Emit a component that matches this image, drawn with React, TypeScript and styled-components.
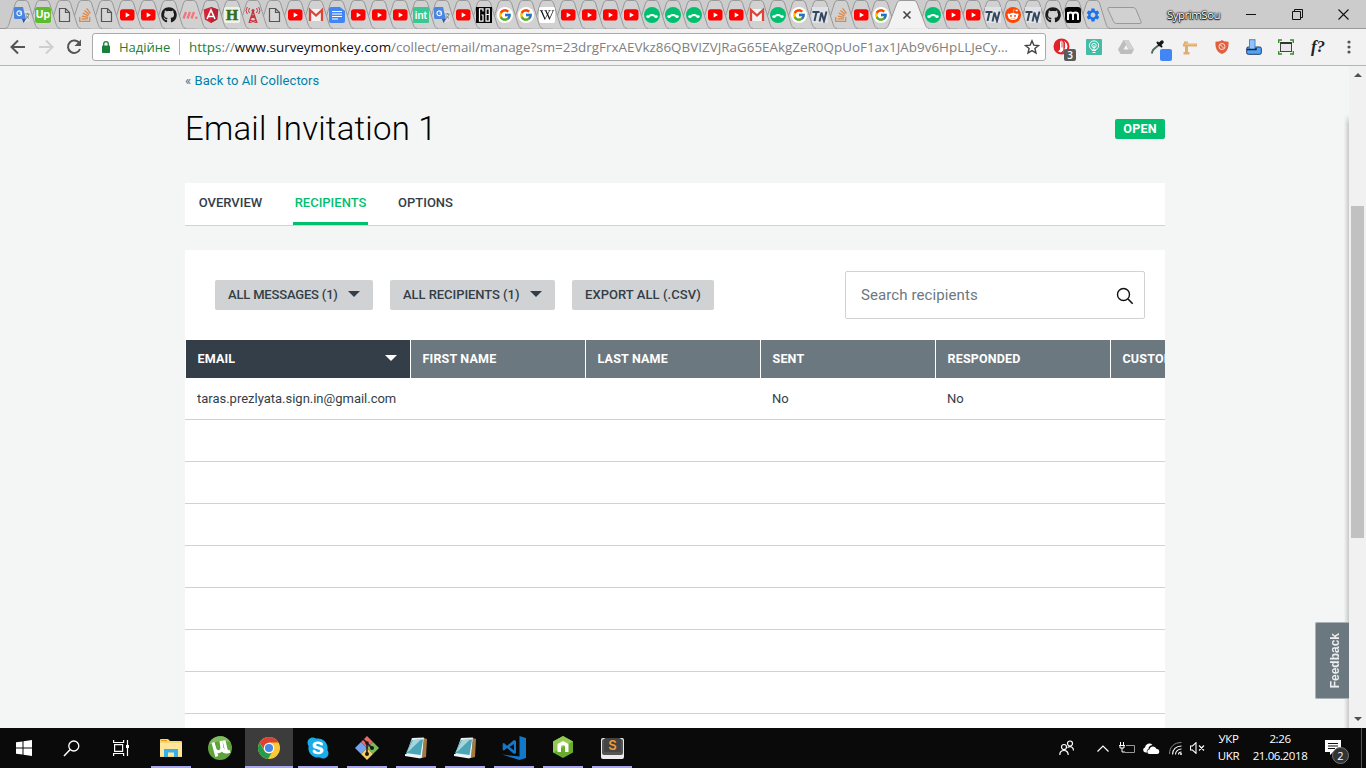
import React from "react";
import styled, { createGlobalStyle, css } from "styled-components";
import { FcGoogle } from "react-icons/fc";
import { FaGithub, FaStackOverflow, FaWikipediaW, FaRedditAlien, FaSkype } from "react-icons/fa";
import { MdSettings } from "react-icons/md";

const ui = '"Open Sans", "Noto Sans", sans-serif';
const brand = 'Roboto, "Liberation Sans", sans-serif';

const GlobalStyle = createGlobalStyle`
  * { box-sizing: border-box; }
  body { margin: 0; overflow: hidden; background: #f4f6f5; }
  svg { display: block; }
`;

const Screen = styled.div`
  width: 1366px;
  height: 768px;
  display: flex;
  flex-direction: column;
  overflow: hidden;
`;

/* ---------- tab strip ---------- */

const TabStrip = styled.div`
  height: 29px;
  flex: none;
  display: flex;
  background: #cccccc;
  border-bottom: 1px solid #999;
  padding-left: 11.5px;
`;

const TabItem = styled.div<{ $w: number; $z: number; $shift: number }>`
  position: relative;
  width: ${(p) => p.$w}px;
  height: 29px;
  margin-left: ${(p) => p.$shift}px;
  flex: none;
  z-index: ${(p) => p.$z};
  display: flex;
  justify-content: center;
  padding-top: 7px;
`;

const TabShape = styled.svg`
  position: absolute;
  top: 0;
  left: 50%;
  transform: translateX(-50%);
  overflow: visible;
`;

const Fav = styled.div`
  position: relative;
  width: 16px;
  height: 16px;
  flex: none;
  z-index: 1;
`;

const NewTab = styled.div`
  padding: 7px 0 0 4px;
`;

const WindowTools = styled.div`
  margin-left: auto;
  display: flex;
  align-items: center;
  height: 28px;
`;

const UserName = styled.div`
  width: 53px;
  margin-right: 8px;
  font: 11.5px ${ui};
  letter-spacing: -0.5px;
  color: #fff;
  text-shadow: 0 0 2px #000, 0 0 1px #000, 0 0 2px #222, 0 1px 1px #222;
`;

const WinButton = styled.div`
  width: 46px;
  height: 28px;
  display: flex;
  align-items: center;
  justify-content: center;
`;

type Kind =
  | "translate" | "up" | "file" | "so" | "yt" | "github" | "mm" | "angular" | "h" | "tower"
  | "gmail" | "docs" | "int" | "gb" | "google" | "wiki" | "sm" | "tn" | "reddit" | "m" | "gear" | "active";

const tabs: Kind[] = [
  "translate", "up", "file", "so", "file", "yt", "yt", "github", "mm", "angular", "h", "tower", "file", "yt",
  "gmail", "docs", "yt", "yt", "yt", "int", "translate", "yt", "gb", "google", "google", "wiki", "yt", "yt",
  "yt", "yt", "sm", "sm", "sm", "yt", "yt", "gmail", "sm", "google", "tn", "so", "yt", "google", "active",
  "sm", "yt", "yt", "tn", "reddit", "tn", "github", "m", "gear",
];

const S = ({ children }: { children: React.ReactNode }) => (
  <svg width="16" height="16" viewBox="0 0 16 16">{children}</svg>
);

const Favicon = ({ kind }: { kind: Kind }) => {
  switch (kind) {
    case "translate":
      return (
        <S>
          <path d="M6 4h9a1 1 0 0 1 1 1v9l-2 1H9z" fill="#dcdcdc" />
          <path d="M1 0h8l3 12H1.500A1.500 1.500 0 0 1 0 10.500V1.500A1.500 1.500 0 0 1 1 0z" fill="#4a85e0" />
          <path d="M8 12h4l-2.500 4z" fill="#2a56b8" />
          <path d="M7.500 5.300A2.400 2.400 0 1 0 7.500 7.200V6H5.400" fill="none" stroke="#fff" strokeWidth="1.100" />
          <path d="M11.500 7h4M13.500 6v1M15 7c-.4 2-1.600 3.500-3 4.500M12.300 8.500c.6 1.300 1.500 2.300 2.700 3" fill="none" stroke="#7c8288" strokeWidth="1" />
        </S>
      );
    case "up":
      return (
        <S>
          <rect width="16" height="16" rx="2.500" fill="#5bbc2e" />
          <text x="8" y="11" textAnchor="middle" fontFamily="Inter, sans-serif" fontWeight="700" fontSize="10.500" fill="#fff">Up</text>
        </S>
      );
    case "file":
      return <S><path d="M3.500 1.500h6l4 4v9h-10zM9.500 1.500v4h4" fill="#d6d6d6" stroke="#555" strokeWidth="1.200" /></S>;
    case "so":
      return <FaStackOverflow size={16} color="#e08743" />;
    case "yt":
      return (
        <S>
          <rect x="1" y="2.300" width="14.500" height="11.200" rx="2.800" fill="#f00" />
          <path d="M6.700 5.500v5L11 8z" fill="#fff" />
        </S>
      );
    case "github":
      return <FaGithub size={16} color="#1b1b1b" />;
    case "mm":
      return (
        <S>
          <path d="M1.500 11.500L4 5M5.500 11.500L8 5M9.500 11.500L12 5" stroke="#f2757d" strokeWidth="2.300" />
          <circle cx="14.300" cy="10.700" r="1.300" fill="#f2757d" />
        </S>
      );
    case "angular":
      return (
        <S>
          <path d="M8 0l7.300 2.600-1.100 10L8 16l-6.200-3.400-1.100-10z" fill="#d32438" />
          <path d="M8 0l7.300 2.600-1.100 10L8 16z" fill="#b52535" />
          <path d="M4 12L8 3l4 9M5.500 9.500h5" fill="none" stroke="#fff" strokeWidth="1.600" />
        </S>
      );
    case "h":
      return (
        <S>
          <rect width="16" height="16" rx="2" fill="#eef3e9" />
          <text x="8" y="13.200" textAnchor="middle" fontFamily='"Liberation Serif", serif' fontWeight="700" fontSize="15.500" stroke="#336c20" strokeWidth=".6" fill="#336c20">H</text>
        </S>
      );
    case "tower":
      return (
        <S>
          <path d="M8 4L4 16M8 4l4 12M6.500 8l4 3.500M9.500 8l-4 3.500M5 13l6 2.500M11 13l-6 2.500" fill="none" stroke="#c8343c" strokeWidth="1.300" />
          <circle cx="8" cy="3.500" r="1.500" fill="#c8343c" />
          <path d="M4.500 1a4 4 0 0 0 0 5M11.500 1a4 4 0 0 1 0 5M2.300 0a6 6 0 0 0 0 7M13.700 0a6 6 0 0 1 0 7" fill="none" stroke="#c8343c" />
        </S>
      );
    case "gmail":
      return (
        <S>
          <rect x="1" y="2" width="14" height="12" rx="1" fill="#f3f3f3" />
          <path d="M2 14V3l6 5.500L14 3v11" fill="none" stroke="#dc4437" strokeWidth="2.300" />
        </S>
      );
    case "docs":
      return (
        <S>
          <path d="M2 0h9l5 4v10a2 2 0 0 1-2 2H2a2 2 0 0 1-2-2V2a2 2 0 0 1 2-2z" fill="#4285f4" />
          <path d="M3 4.500h10M3 7h10M3 9.500h10M3 12h6" stroke="#fff" strokeWidth="1.200" />
        </S>
      );
    case "int":
      return (
        <S>
          <rect width="16" height="16" rx="1" fill="#3bc792" />
          <text x="8" y="12" textAnchor="middle" fontFamily="Inter, sans-serif" fontWeight="600" fontSize="10" fill="#fff">int</text>
        </S>
      );
    case "gb":
      return (
        <S>
          <rect width="16" height="16" fill="#050505" />
          <path d="M7 4.500V1.800H3.500v12.400H7V8H5.500M10 1.800h3.300v12.400H10zM10 7.500h3" fill="none" stroke="#fff" strokeWidth="1.200" />
        </S>
      );
    case "google":
      return (
        <S>
          <circle cx="8" cy="8" r="8" fill="#fff" />
          <g transform="translate(1 1)"><FcGoogle size={14} /></g>
        </S>
      );
    case "wiki":
      return (
        <S>
          <rect width="16" height="16" rx="2" fill="#fff" />
          <g transform="translate(.5 .5)"><FaWikipediaW size={15} color="#111" /></g>
        </S>
      );
    case "sm":
      return (
        <S>
          <circle cx="8" cy="8" r="8" fill="#00bf6f" />
          <path d="M4 10.800a4.200 4.200 0 0 1 8 0" fill="none" stroke="#fff" strokeWidth="2" />
          <circle cx="3.500" cy="9.500" r="1.200" fill="#fff" />
          <circle cx="12.500" cy="9.500" r="1.200" fill="#fff" />
        </S>
      );
    case "tn":
      return (
        <S>
          <rect width="16" height="16" fill="#dfe2e6" />
          <path d="M.500 5h7M4.500 5L2.500 14M7.500 14.500L9.500 5.500l2.500 8.500L14.500 4.500" fill="none" stroke="#32465e" strokeWidth="1.900" />
        </S>
      );
    case "reddit":
      return (
        <S>
          <circle cx="8" cy="8" r="8" fill="#ff4500" />
          <g transform="translate(2 1.800)"><FaRedditAlien size={12} color="#fff" /></g>
        </S>
      );
    case "m":
      return (
        <S>
          <rect width="16" height="16" rx="3" fill="#050505" />
          <path d="M3 13V5M3 8c0-3.200 5-3.200 5 0v5M8 8c0-3.200 5-3.200 5 0v5" fill="none" stroke="#fff" strokeWidth="2" />
        </S>
      );
    case "gear":
      return <MdSettings size={16} color="#1a73e8" />;
    case "active":
      return <S><path d="M4.500 4.500l7 7M11.500 4.500l-7 7" stroke="#444" strokeWidth="1.600" /></S>;
  }
};

/* ---------- address bar ---------- */

const Toolbar = styled.div`
  height: 37px;
  flex: none;
  display: flex;
  align-items: center;
  background: #f2f2f2;
  border-bottom: 1px solid #b6b6b6;
`;

const NavButtons = styled.div`
  width: 92px;
  padding-left: 9px;
  display: flex;
  gap: 10px;
`;

const Omnibox = styled.div`
  width: 954px;
  height: 28px;
  background: #fff;
  border: 1px solid #aaa;
  border-radius: 3px;
  display: flex;
  align-items: center;
  padding: 0 5px 0 8px;
  font: 13.6px ${ui};
`;

const Secure = styled.span`
  width: 60px;
  margin-left: 8px;
  color: #188038;
  white-space: nowrap;
  font-size: 13px;
`;

const Separator = styled.i`
  width: 1px;
  height: 16px;
  margin-right: 9px;
  background: #aaa;
`;

const Url = styled.span`
  flex: 1;
  white-space: nowrap;
  color: #808080;
  font-size: 13.4px;
  letter-spacing: 0.015px;
  b { font-weight: 400; color: #111; }
  em { font-style: normal; color: #188038; }
`;

const Extensions = styled.div`
  display: flex;
  flex: 1;
`;

const Extension = styled.div`
  position: relative;
  width: 32px;
  height: 24px;
  flex: none;
  display: flex;
  align-items: center;
  justify-content: center;
  &:last-child { width: 29px; }
`;

const Count = styled.span`
  position: absolute;
  left: 18px;
  top: 14px;
  width: 12px;
  height: 12px;
  border-radius: 2px;
  background: #5a5a5a;
  color: #fff;
  font: 600 10px/12px ${ui};
  text-align: center;
`;

const Swatch = styled(Count)`
  background: #4285f4;
`;

const FnLabel = styled.span`
  font: italic 700 17px/20px "Liberation Serif", serif;
  color: #222;
`;

/* ---------- page ---------- */

const Viewport = styled.div`
  height: 662px;
  flex: none;
  display: flex;
  position: relative;
`;

const Page = styled.main`
  width: 1349px;
  overflow: hidden;
  position: relative;
  background: #f4f6f5;
  padding-left: 185px;
  font-family: ${brand};
  color: #333e48;
`;

const Content = styled.div`
  width: 980px;
`;

const BackLink = styled.a`
  display: block;
  height: 30px;
  line-height: 29px;
  font-size: 13px;
  letter-spacing: 0.08px;
  color: #007faa;
`;

const TitleRow = styled.header`
  height: 87px;
  display: flex;
  justify-content: space-between;
  align-items: flex-start;
`;

const Title = styled.h1`
  margin: 13px 0 0;
  font-weight: 300;
  font-size: 33px;
  line-height: 40px;
  letter-spacing: 0.2px;
  color: #000;
`;

const Status = styled.span`
  width: 50px;
  height: 20px;
  margin-top: 23px;
  border-radius: 2px;
  background: #00bf6f;
  color: #fff;
  font-weight: 700;
  font-size: 12.5px;
  letter-spacing: 0.2px;
  line-height: 20px;
  text-align: center;
`;

const Nav = styled.nav`
  height: 43px;
  background: #fff;
  border-bottom: 1px solid #d0d2d3;
  display: flex;
  padding-left: 11px;
  gap: 28px;
`;

const NavItem = styled.a<{ $active?: boolean; $w: number }>`
  width: ${(p) => p.$w}px;
  height: 42px;
  text-align: center;
  font-weight: 500;
  font-size: 13px;
  line-height: 40px;
  color: ${(p) => (p.$active ? "#00bf6f" : "#333e48")};
  border-bottom: 3px solid ${(p) => (p.$active ? "#00bf6f" : "transparent")};
`;

const Panel = styled.section`
  margin-top: 24px;
  height: 478px;
  background: #fff;
  overflow: hidden;
`;

const Filters = styled.div`
  height: 90px;
  display: flex;
  align-items: center;
  padding: 0 20px 0 30px;
  gap: 17px;
`;

const Button = styled.button<{ $w: number; $ls?: number }>`
  width: ${(p) => p.$w}px;
  height: 30px;
  border: 0;
  border-radius: 2px;
  background: #d0d2d3;
  color: #333e48;
  font: 500 13px ${brand};
  letter-spacing: ${(p) => p.$ls ?? 0}px;
  display: flex;
  align-items: center;
  justify-content: space-between;
  padding: 0 13px 2px;
  white-space: nowrap;
`;

const Caret = styled.i`
  border: 6px solid transparent;
  border-top-color: currentColor;
  border-bottom: 0;
`;

const Search = styled.div`
  width: 300px;
  height: 48px;
  margin-left: auto;
  border: 1px solid #d0d2d3;
  border-radius: 2px;
  display: flex;
  align-items: center;
  justify-content: space-between;
  padding: 0 10px 0 15px;
  font-size: 15px;
  letter-spacing: 0.1px;
  color: #6b787f;
  svg { margin-top: 2px; }
`;

const rowGrid = css`
  display: grid;
  grid-template-columns: 225px repeat(4, 175px) 175px;
`;

const HeadRow = styled.div`
  ${rowGrid}
  height: 38px;
  padding-left: 1px;
`;

const HeadCell = styled.div<{ $sorted?: boolean }>`
  display: flex;
  align-items: center;
  justify-content: space-between;
  padding: 0 13px 2px 11.500px;
  border-right: 1px solid #fff;
  background: ${(p) => (p.$sorted ? "#333e48" : "#6b787f")};
  color: #fff;
  font-weight: 700;
  font-size: 12.5px;
  letter-spacing: 0.18px;
  white-space: nowrap;
`;

const Row = styled.div`
  ${rowGrid}
  height: 42px;
  border-bottom: 1px solid #d0d2d3;
  font-size: 13px;
  line-height: 41px;
  span { padding-left: 12px; letter-spacing: -0.01px; white-space: nowrap; }
`;

const EdgeShadow = styled.div`
  position: absolute;
  right: 0;
  top: 48px;
  bottom: 0;
  width: 5px;
  background: linear-gradient(to right, rgba(0, 0, 0, 0), rgba(0, 0, 0, 0.18));
  mask-image: linear-gradient(to bottom, transparent, #000 10px);
`;

const Feedback = styled.div`
  position: absolute;
  right: 0;
  top: 556px;
  width: 34px;
  height: 77px;
  border: 1px solid #a9b2b6;
  border-right: 0;
  border-radius: 2px 0 0 2px;
  background: #6b787f;
  color: #eceeef;
  display: flex;
  align-items: center;
  justify-content: center;
  padding-left: 5px;
  font: 700 12px "Liberation Sans", sans-serif;
  span { writing-mode: vertical-rl; transform: rotate(180deg); }
`;

const Scrollbar = styled.div`
  width: 17px;
  background: #f1f1f1;
  display: flex;
  flex-direction: column;
  align-items: center;
`;

const Arrow = styled.div<{ $down?: boolean }>`
  height: 17px;
  padding-top: 7px;
  transform: ${(p) => (p.$down ? "rotate(180deg)" : "none")};
`;

const Track = styled.div`
  flex: 1;
  padding-top: 123px;
`;

const Thumb = styled.div`
  width: 13px;
  height: 332px;
  background: #c1c1c1;
`;

/* ---------- taskbar ---------- */

const Taskbar = styled.footer`
  height: 40px;
  flex: none;
  display: flex;
  background: #0a0a0a;
  color: #fff;
  font-family: ${ui};
`;

const Task = styled.div<{ $open?: boolean; $focus?: boolean; $w?: number }>`
  width: ${(p) => p.$w ?? 49}px;
  height: 40px;
  margin-right: ${(p) => (p.$focus ? 1 : 0)}px;
  padding-right: ${(p) => (p.$focus ? 0 : 1)}px;
  display: flex;
  align-items: center;
  justify-content: center;
  flex-direction: column;
  position: relative;
  background: ${(p) => (p.$focus ? "#3c3c3c" : "transparent")};
  &::after {
    content: "";
    position: absolute;
    bottom: 0;
    left: ${(p) => (p.$focus ? 0 : 4)}px;
    right: ${(p) => (p.$focus ? 0 : 5)}px;
    height: 2px;
    background: ${(p) => (p.$open ? "#a9a8ea" : "transparent")};
  }
`;

const Tray = styled.div`
  margin-left: auto;
  display: flex;
  align-items: center;
`;

const TrayIcon = styled.div<{ $w: number }>`
  width: ${(p) => p.$w}px;
  display: flex;
  justify-content: center;
`;

const TwoLines = styled.div<{ $w: number }>`
  width: ${(p) => p.$w}px;
  font-size: 11.5px;
  line-height: 17px;
  letter-spacing: -0.4px;
  text-align: center;
  padding-bottom: 2px;
`;

const Notice = styled.div`
  position: relative;
  width: 45px;
  height: 40px;
  padding: 12px 0 0 9px;
`;

const NoticeCount = styled.span`
  position: absolute;
  left: 16px;
  top: 19px;
  width: 17px;
  height: 17px;
  border-radius: 50%;
  border: 1px solid #777;
  background: #333;
  font-size: 11px;
  line-height: 15px;
  text-align: center;
`;

const Peek = styled.div`
  width: 5px;
  height: 40px;
  border-left: 1px solid #555;
`;

const NotepadIcon = () => (
  <svg width="24" height="24" viewBox="0 0 24 24">
    <path d="M20 2l3 1-1 18-4 1z" fill="#a4783e" />
    <path d="M8 2l12-.5L18 22 2 19z" fill="#e6f1f3" />
    <path d="M8 4l11-.5L16.500 19 2 17z" fill="#4ba5b4" />
    <path d="M9 4l8-.5L5 15l-2 1z" fill="#a8d5dc" />
    <path d="M1 18l16 2.500-.5 2L1 20z" fill="#f5f5f5" />
  </svg>
);

const App = () => (
  <Screen>
    <GlobalStyle />
    <TabStrip>
      {tabs.map((kind, i) => {
        const active = kind === "active";
        return (
          <TabItem key={i} $w={active ? 32 : i < 40 ? 21 : 20} $z={active ? 100 : 80 - i} $shift={i === 40 ? -0.5 : 0}>
            <TabShape width={active ? 44 : 34} height="29" viewBox={active ? "0 0 44 29" : "0 0 34 29"}>
              <path
                d={
                  active
                    ? "M0 28.500C3 28 3 26 4 24L12 3Q13 .500 15 .500H29Q31 .500 32 3L40 24C41 26 41 28 44 28.500"
                    : "M0 28.500C3 28 3 26 4 24L10.500 3Q11.500 .500 13.500 .500H20.500Q22.500 .500 23.500 3L30 24C31 26 31 28 34 28.500"
                }
                fill={active ? "#f2f2f2" : "#d1d1d1"}
                stroke="#999"
              />
              {active && <path d="M1 29h42" stroke="#f2f2f2" strokeWidth="1.500" />}
            </TabShape>
            <Fav><Favicon kind={kind} /></Fav>
          </TabItem>
        );
      })}
      <NewTab>
        <svg width="36" height="18" viewBox="0 0 36 18">
          <path d="M2 .5h24q2 0 3 2l5 12q.800 2-1 2H9.500q-2 0-3-2L1 2.500q-.600-2 1-2z" fill="#d1d1d1" stroke="#999" />
        </svg>
      </NewTab>
      <WindowTools>
        <UserName>SyprimSou</UserName>
        <WinButton><svg width="10" height="10"><path d="M0 5.500h10" stroke="#111" /></svg></WinButton>
        <WinButton><svg width="11" height="11"><path d="M.5 2.500h8v8h-8zM2.500 2.500v-2h8v8h-2" fill="none" stroke="#111" /></svg></WinButton>
        <WinButton><svg width="11" height="11"><path d="M.5.500l10 10M10.500.500l-10 10" stroke="#111" strokeWidth="1.100" /></svg></WinButton>
      </WindowTools>
    </TabStrip>

    <Toolbar>
      <NavButtons>
        <svg width="18" height="18" viewBox="0 0 18 18"><path d="M16 9H3M9 2.500L2.500 9 9 15.500" fill="none" stroke="#555" strokeWidth="2" /></svg>
        <svg width="18" height="18" viewBox="0 0 18 18"><path d="M2 9h13M9 2.500L15.500 9 9 15.500" fill="none" stroke="#cfcfcf" strokeWidth="2" /></svg>
        <svg width="18" height="18" viewBox="0 0 18 18"><path d="M14.500 5.500A6.200 6.200 0 1 0 15 11" fill="none" stroke="#555" strokeWidth="2" /><path d="M16 1.500V8H9.500z" fill="#555" /></svg>
      </NavButtons>
      <Omnibox>
        <svg width="10" height="13" viewBox="0 0 10 13"><rect x="1" y="4.500" width="8" height="7.500" rx=".8" fill="#188038" /><path d="M2.700 5V3a2.300 2.300 0 0 1 4.600 0v2" fill="none" stroke="#188038" strokeWidth="1.300" /></svg>
        <Secure>Надійне</Secure>
        <Separator />
        <Url><em>https</em>://<b>www.surveymonkey.com</b>/collect/email/manage?sm=23drgFrxAEVkz86QBVIZVJRaG65EAkgZeR0QpUoF1ax1JAb9v6HpLLJeCy…</Url>
        <svg width="16" height="16" viewBox="0 0 16 16"><path d="M8 1.800l1.800 4.300 4.700.4-3.600 3 1.100 4.600L8 11.600 4 14.100l1.100-4.600-3.600-3 4.700-.4z" fill="none" stroke="#444" strokeWidth="1.400" /></svg>
      </Omnibox>
      <Extensions>
        <Extension>
          <svg width="18" height="18" viewBox="0 0 18 18"><circle cx="8.500" cy="8.500" r="7" fill="#fff" stroke="#e42128" strokeWidth="2" /><path d="M8.500 1.500a7 7 0 0 0-4 12.500L7 11.500V4z" fill="#e42128" /><path d="M6.500 4.500v5.500M9 3v6.500M11.500 4v6" stroke="#c8232a" strokeWidth=".8" /><path d="M8.500 1.500a5 7 0 0 1 2.500 3v8l-3 3" fill="none" stroke="#e42128" strokeWidth="1.300" /></svg>
          <Count>3</Count>
        </Extension>
        <Extension>
          <svg width="16" height="16" viewBox="0 0 16 16"><rect width="16" height="16" rx="1" fill="#43bda5" /><circle cx="8" cy="6.500" r="4.600" fill="none" stroke="#fff" /><circle cx="8" cy="6.500" r="2.200" fill="none" stroke="#fff" /><path d="M6 11.500h4M6.500 13.500h3M8 6v5" stroke="#fff" /></svg>
        </Extension>
        <Extension>
          <svg width="16" height="16" viewBox="0 0 16 16"><path d="M5.500 1h5L16 10.500 13.500 15H2.500L0 10.500z" fill="#bdbdbd" /><path d="M5.500 1h5L16 10.500h-5z" fill="#d2d2d2" /><path d="M8 6l2.500 4.500h-5z" fill="#f2f2f2" /></svg>
        </Extension>
        <Extension>
          <svg width="18" height="18" viewBox="0 0 18 18"><path d="M3 15.500C3 12 5 11 10.500 6.500" fill="none" stroke="#4c6b58" strokeWidth="2" /><path d="M8.500 4.500l4 4" stroke="#151515" strokeWidth="2" strokeLinecap="round" /><path d="M10.500 6.500L13 4" stroke="#151515" strokeWidth="3.400" strokeLinecap="round" /></svg>
          <Swatch />
        </Extension>
        <Extension>
          <svg width="16" height="16" viewBox="0 0 16 16"><path d="M2 2.500h4v2h9v3H6V13h1.500v2.500h-6V13H3V7.500H1v-3h1z" fill="#e2ad72" /><path d="M3 5h11" stroke="#f3cfa2" /></svg>
        </Extension>
        <Extension>
          <svg width="14" height="14" viewBox="0 0 14 14"><path d="M7 0l2 1.300 4.500.4C14 8 12 12 7 14 2 12 0 8 .5 1.700L5 1.300z" fill="#e0603f" /><circle cx="7" cy="6.500" r="3" fill="none" stroke="#fbe3da" /><path d="M5 4.500l4 4" stroke="#fbe3da" /></svg>
        </Extension>
        <Extension>
          <svg width="16" height="16" viewBox="0 0 16 16"><rect x=".7" y="8" width="14.600" height="7.300" rx="1.500" fill="#4ea4f7" stroke="#223d63" /><rect x="3.500" y=".7" width="5.500" height="10" fill="#8ec4fa" stroke="#4c86c8" /><path d="M1 10.500h9V9" fill="none" stroke="#16294a" strokeWidth="1.500" /></svg>
        </Extension>
        <Extension>
          <svg width="16" height="16" viewBox="0 0 16 16"><path d="M.7 4V1H4M12 1h3.300v3M.7 12v3H4M12 15h3.300v-3" fill="none" stroke="#3c8c32" strokeWidth="1.400" /><rect x="2.500" y="3.500" width="11" height="9" fill="#e7e7e7" stroke="#444" /><path d="M2.500 4h11" stroke="#333" strokeWidth="2" /></svg>
        </Extension>
        <Extension><FnLabel>f?</FnLabel></Extension>
        <Extension>
          <svg width="4" height="14" viewBox="0 0 4 14"><circle cx="2" cy="2" r="1.600" fill="#555" /><circle cx="2" cy="7" r="1.600" fill="#555" /><circle cx="2" cy="12" r="1.600" fill="#555" /></svg>
        </Extension>
      </Extensions>
    </Toolbar>

    <Viewport>
      <Page>
        <Content>
          <BackLink>« Back to All Collectors</BackLink>
          <TitleRow>
            <Title>Email Invitation 1</Title>
            <Status>OPEN</Status>
          </TitleRow>
          <Nav>
            <NavItem $w={69}>OVERVIEW</NavItem>
            <NavItem $w={75} $active>RECIPIENTS</NavItem>
            <NavItem $w={59}>OPTIONS</NavItem>
          </Nav>
          <Panel>
            <Filters>
              <Button $w={158} $ls={-0.18}>ALL MESSAGES (1) <Caret /></Button>
              <Button $w={165} $ls={-0.05}>ALL RECIPIENTS (1) <Caret /></Button>
              <Button $w={142} $ls={0.06}>EXPORT ALL (.CSV)</Button>
              <Search>
                Search recipients
                <svg width="18" height="18" viewBox="0 0 18 18"><circle cx="7.500" cy="7.500" r="6" fill="none" stroke="#111" strokeWidth="1.400" /><path d="M12 12l4.700 4.700" stroke="#111" strokeWidth="1.600" /></svg>
              </Search>
            </Filters>
            <HeadRow>
              <HeadCell $sorted>EMAIL <Caret /></HeadCell>
              <HeadCell>FIRST NAME</HeadCell>
              <HeadCell>LAST NAME</HeadCell>
              <HeadCell>SENT</HeadCell>
              <HeadCell>RESPONDED</HeadCell>
              <HeadCell>CUSTOM DATA</HeadCell>
            </HeadRow>
            <Row>
              <span>taras.prezlyata.sign.in@gmail.com</span>
              <span /><span />
              <span>No</span>
              <span>No</span>
            </Row>
            {Array.from({ length: 8 }, (_, i) => <Row key={i} />)}
          </Panel>
        </Content>
        <EdgeShadow />
        <Feedback><span>Feedback</span></Feedback>
      </Page>
      <Scrollbar>
        <Arrow><svg width="8" height="4"><path d="M0 4l4-4 4 4z" fill="#505050" /></svg></Arrow>
        <Track><Thumb /></Track>
        <Arrow $down><svg width="8" height="4"><path d="M0 4l4-4 4 4z" fill="#505050" /></svg></Arrow>
      </Scrollbar>
    </Viewport>

    <Taskbar>
      <Task $w={48}>
        <svg width="16" height="16" viewBox="0 0 16 16"><path d="M0 2.300L6.500 1.400v6.100H0zM7.500 1.200L16 0v7.500H7.500zM0 8.500h6.500v6.100L0 13.700zM7.500 8.500H16V16l-8.500-1.200z" fill="#fff" /></svg>
      </Task>
      <Task $w={48}>
        <svg width="17" height="17" viewBox="0 0 17 17"><circle cx="10.800" cy="6" r="5" fill="none" stroke="#fff" strokeWidth="1.300" /><path d="M7.200 9.600L1 16" stroke="#fff" strokeWidth="1.500" /></svg>
      </Task>
      <Task $w={51}>
        <svg width="17" height="16" viewBox="0 0 17 16"><path d="M.6 0v2.500h10V0M.6 16v-2.500h10V16M1.600 4.700h8v6.600h-8zM14.500 0v16" fill="none" stroke="#fff" strokeWidth="1.200" /><rect x="13" y="5" width="3" height="3" fill="#fff" /></svg>
      </Task>
      <Task $open>
        <svg width="22" height="18" viewBox="0 0 22 18"><path d="M0 1a1 1 0 0 1 1-1h7l2 2h11a1 1 0 0 1 1 1v15H0z" fill="#f9d66d" /><path d="M0 4h22v13H0z" fill="#fde69b" /><path d="M4 18v-8h14v8h-4v-4.500H8V18z" fill="#3aaee7" /><path d="M1 1.500h6" stroke="#e69e24" /></svg>
      </Task>
      <Task>
        <svg width="24" height="24" viewBox="0 0 24 24">
          <circle cx="12" cy="12" r="12" fill="#5fa33c" />
          <path d="M1 9a11.500 11.500 0 0 1 21-3C15 4 7 5 1 9z" fill="#83bd62" />
          <path d="M5 6.500L8.800 20.500M6.300 11c1.500 6.500 8 6 7.500 0L13 5M16 4.500l2 8.500c.7 3 2 3 4 2.200M14 12c1 3.500 2.500 4.500 5.500 4" fill="none" stroke="#fff" strokeWidth="3" />
        </svg>
      </Task>
      <Task $w={48} $open $focus>
        <svg width="22" height="22" viewBox="0 0 22 22"><circle cx="11" cy="11" r="11" fill="#fbc935" /><path d="M1.500 5.500A11 11 0 0 1 20.500 5.500H11L7 13.500z" fill="#d94334" /><path d="M1.500 5.500L6.500 14a5 5 0 0 0 7.500 1.200L10 22A11 11 0 0 1 1.500 5.500z" fill="#249b52" /><circle cx="11" cy="11" r="5.200" fill="#fff" /><circle cx="11" cy="11" r="4.100" fill="#4688ea" /></svg>
      </Task>
      <Task $open>
        <svg width="24" height="24" viewBox="0 0 24 24"><circle cx="12" cy="12" r="8.500" fill="#fff" /><FaSkype size={24} color="#19aee9" /></svg>
      </Task>
      <Task $open>
        <svg width="24" height="24" viewBox="0 0 24 24"><path d="M12 0l6 6-6 6-6-6z" fill="#e56a6a" /><path d="M6 6l6 6-6 6-6-6z" fill="#72a5ed" /><path d="M18 6l6 6-6 6-6-6z" fill="#7abd56" /><path d="M12 12l6 6-6 6-6-6z" fill="#f3cf61" /><path d="M8 3l4 4v11M12 7l5 5" stroke="#181818" strokeWidth="1.500" fill="none" /><circle cx="12" cy="7" r="1.800" fill="#181818" /><circle cx="12" cy="18" r="2" fill="#181818" /><circle cx="17" cy="12" r="2" fill="#181818" /></svg>
      </Task>
      <Task $open><NotepadIcon /></Task>
      <Task $open><NotepadIcon /></Task>
      <Task $open>
        <svg width="24" height="24" viewBox="0 0 24 24"><path d="M17.500 0L24 2v20l-6.500 2L0 18.500l17.500 2z" fill="#1178ca" /><path d="M2 7l3 2.700L12 4l2 1v12l-2 1-7-6L2 14.500.7 14V7.500zM12 8L7.500 11 12 14.300z" fill="#1178ca" fillRule="evenodd" /></svg>
      </Task>
      <Task $open>
        <svg width="20" height="24" viewBox="0 0 20 24"><path d="M10 0l10 5.500v11L10 22 0 16.500v-11z" fill="#69ac2d" /><path d="M10 0l10 5.500L0 16.500v-11z" fill="#94ca51" /><path d="M4.500 8L10 5l5.500 3v8H12v-6l-2-1-2 1v6H4.500z" fill="#fff" /></svg>
      </Task>
      <Task $open>
        <svg width="23" height="21" viewBox="0 0 23 21"><rect width="23" height="21" rx="2" fill="#ececec" /><rect x="1" y="1" width="21" height="16" rx="2" fill="#555" /><rect x="3" y="0" width="17" height="14" rx="1.500" fill="#444" /><text x="11.500" y="12" textAnchor="middle" fontFamily="Inter, sans-serif" fontSize="13" fontWeight="600" fill="#f09a35">S</text></svg>
      </Task>
      <Tray>
        <TrayIcon $w={36}>
          <svg width="16" height="16" viewBox="0 0 16 16"><circle cx="5" cy="7" r="2.500" fill="none" stroke="#fff" strokeWidth="1.200" /><path d="M.8 15c0-6 8.400-6 8.400 0M8.500 7.500c3-2 6-.500 6 3" fill="none" stroke="#fff" strokeWidth="1.200" /><circle cx="11" cy="3.500" r="2.500" fill="none" stroke="#fff" strokeWidth="1.200" /></svg>
        </TrayIcon>
        <TrayIcon $w={36}><svg width="12" height="7"><path d="M.5 6.500L6 1l5.500 5.500" fill="none" stroke="#fff" strokeWidth="1.200" /></svg></TrayIcon>
        <TrayIcon $w={12}>
          <svg width="17" height="12" viewBox="0 0 17 12" style={{ flex: "none" }}><path d="M1.500 0v3M4.500 0v3M0 3.500h6M1 4v2h4V4M3 6v4h3" fill="none" stroke="#fff" /><path d="M7 3.500h8.500v7H6" fill="none" stroke="#999" /></svg>
        </TrayIcon>
        <TrayIcon $w={36}>
          <svg width="17" height="11" viewBox="0 0 17 11"><path d="M4 9.500H2.500A2.500 2.500 0 0 1 2 4.600 4.300 4.300 0 0 1 9.500 2C6.500 2.500 5.500 4 5.500 6 4 6.500 3.500 8 4 9.500z" fill="#fff" /><path d="M6.500 11a2.200 2.200 0 0 1 0-4.500C7 2.500 12.500 2.500 13.500 6A2.500 2.500 0 0 1 14 11z" fill="#fff" /></svg>
        </TrayIcon>
        <TrayIcon $w={13}>
          <svg width="13" height="13" viewBox="0 0 13 13" style={{ flex: "none" }}><path d="M.5 12C.5 5 5 .5 12.500 .5" fill="none" stroke="#888" /><path d="M3.500 12.500c0-5 3.500-8.500 9-8.500M6.500 12.500c0-3 2.500-5.500 6-5.500M9.500 12.500c0-1.500 1.200-2.500 3-2.500" fill="none" stroke="#fff" strokeWidth="1.100" /><circle cx="12" cy="12" r="1" fill="#fff" /></svg>
        </TrayIcon>
        <TrayIcon $w={31}>
          <svg width="15" height="12" viewBox="0 0 15 12"><path d="M.5 4h2L6 .700v10.600L2.500 8h-2zM9 3.500l5 5M14 3.500l-5 5" fill="none" stroke="#fff" strokeWidth="1.100" /></svg>
        </TrayIcon>
        <TwoLines $w={31}>УКР<br />UKR</TwoLines>
        <TwoLines $w={72}>2:26<br />21.06.2018</TwoLines>
        <Notice>
          <svg width="17" height="16" viewBox="0 0 17 16"><path d="M0 0h16v12H8l-3 3v-3H0z" fill="#fff" /><path d="M3 3.500h10M3 6h10M3 8.500h7" stroke="#111" /></svg>
          <NoticeCount>2</NoticeCount>
        </Notice>
        <Peek />
      </Tray>
    </Taskbar>
  </Screen>
);

export default App;
